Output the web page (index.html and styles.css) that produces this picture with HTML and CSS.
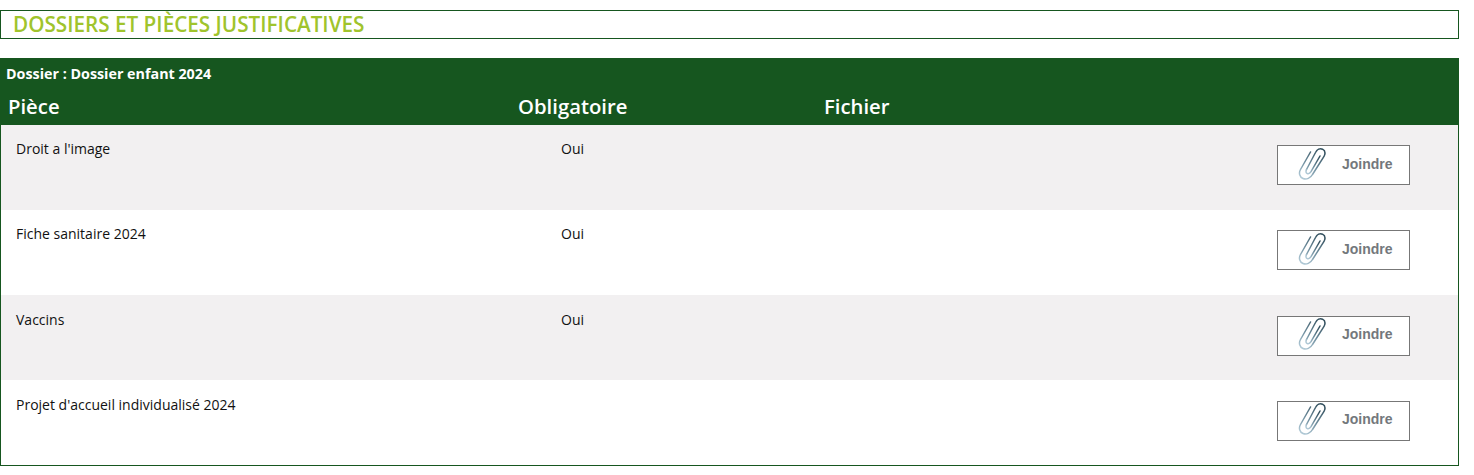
FILE: index.html
```html
<!DOCTYPE html>
<html lang="fr">
<head>
  <meta charset="UTF-8">
  <title>Dossiers et pièces justificatives</title>
  <link rel="stylesheet" href="styles.css">
</head>
<body>
  <svg class="defs" width="0" height="0">
    <defs>
      <linearGradient id="clipGrad" x1="0.7" y1="0" x2="0.2" y2="1">
        <stop offset="0" stop-color="#34515f"/>
        <stop offset="0.55" stop-color="#6f8e9e"/>
        <stop offset="1" stop-color="#afc8d5"/>
      </linearGradient>
      <symbol id="clip" viewBox="0 0 30 34">
        <path d="M9.5 22.5 L18.5 5.5 C20 2.5 23 1 25.5 2.2 C28 3.5 28.5 6.5 27 9.5 L15.5 27.5 C13.5 31 9.5 33 6 31.5 C2.5 30 1.5 26 3.5 22.5 L13.5 5" fill="none" stroke="url(#clipGrad)" stroke-width="1.5" stroke-linecap="round"/>
        <path d="M9.5 22.5 C8.5 24.5 9 26 10.3 26.6 C11.6 27.2 13 26.3 14 24.7 L23 9" fill="none" stroke="url(#clipGrad)" stroke-width="1.5" stroke-linecap="round"/>
      </symbol>
    </defs>
  </svg>

  <h1 class="page-title">DOSSIERS ET PIÈCES JUSTIFICATIVES</h1>

  <div class="dossier">
    <div class="dossier-head">
      <div class="dossier-name">Dossier : Dossier enfant 2024</div>
      <div class="cols">
        <div class="col-piece">Pièce</div>
        <div class="col-oblig">Obligatoire</div>
        <div class="col-file">Fichier</div>
      </div>
    </div>

    <div class="row">
      <div class="cell-piece">Droit a l'image</div>
      <div class="cell-oblig">Oui</div>
      <button class="join"><svg class="clip"><use href="#clip"/></svg><span>Joindre</span></button>
    </div>
    <div class="row">
      <div class="cell-piece">Fiche sanitaire 2024</div>
      <div class="cell-oblig">Oui</div>
      <button class="join"><svg class="clip"><use href="#clip"/></svg><span>Joindre</span></button>
    </div>
    <div class="row">
      <div class="cell-piece">Vaccins</div>
      <div class="cell-oblig">Oui</div>
      <button class="join"><svg class="clip"><use href="#clip"/></svg><span>Joindre</span></button>
    </div>
    <div class="row">
      <div class="cell-piece">Projet d'accueil individualisé 2024</div>
      <div class="cell-oblig"></div>
      <button class="join"><svg class="clip"><use href="#clip"/></svg><span>Joindre</span></button>
    </div>
  </div>
</body>
</html>
```

FILE: styles.css
```css
body {
  margin: 0;
  width: 1459px;
  padding-top: 10px;
  font-family: 'Open Sans', sans-serif;
  font-size: 14px;
  color: #111;
  background: white;
}

.defs {
  position: absolute;
}

.page-title {
  margin: 0 0 19px;
  height: 27px;
  line-height: 27px;
  padding-left: 12px;
  border: 1px solid #16561f;
  font-size: 20.7px;
  font-weight: 600;
  color: #a0c42c;
}

.dossier {
  height: 408px;
  box-sizing: border-box;
  border: 1px solid #16561f;
  border-top: none;
}

.dossier-head {
  background: #16561f;
  color: white;
  height: 66.6px;
  margin: 0 -1px;
}

.dossier-name {
  padding: 6px 0 0 6px;
  font-size: 14.3px;
  line-height: 19px;
  font-weight: 700;
}

.cols {
  display: grid;
  grid-template-columns: 510px 306px 1fr;
  padding: 10px 0 0 8px;
  font-size: 20.3px;
  line-height: 27px;
  font-weight: 600;
}

.row {
  display: grid;
  grid-template-columns: 545px 1fr 133px;
  height: 85.25px;
  padding: 14.5px 48px 0 15px;
  box-sizing: border-box;
  line-height: 19px;
}

.row:nth-child(even) {
  background: #f2f0f1;
}

.join {
  display: flex;
  align-items: center;
  width: 133px;
  height: 40px;
  margin-top: 6px;
  padding: 0 0 3px 19px;
  background: white;
  border: 1px solid #777;
  font-family: 'Liberation Sans', sans-serif;
  font-size: 14px;
  font-weight: 700;
  color: #73787c;
}

.clip {
  width: 30px;
  height: 34px;
  margin-right: 15px;
}
```
